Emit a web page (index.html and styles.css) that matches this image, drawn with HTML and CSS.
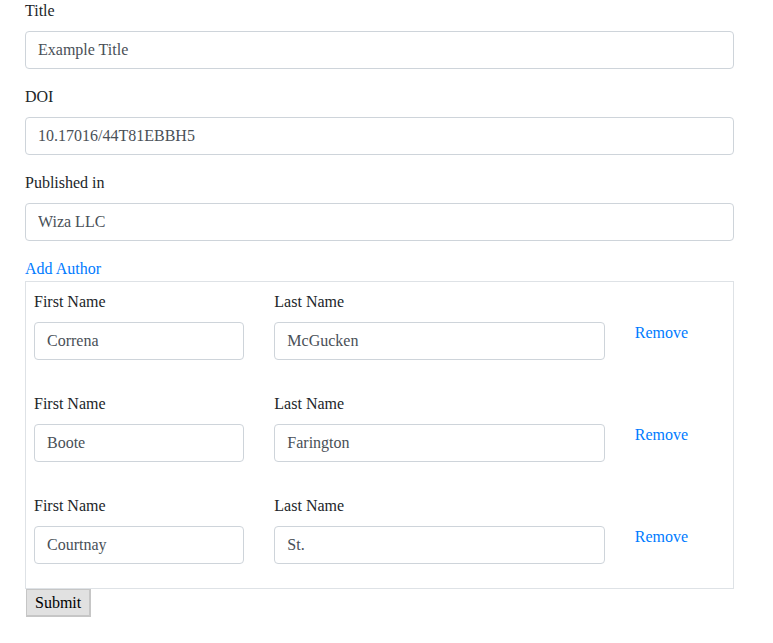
FILE: index.html
```html
<!DOCTYPE html>
<html>
<head>
<meta charset="utf-8">
<link rel="stylesheet" href="styles.css">
</head>
<body>
<form class="container">
  <div class="form-group">
    <label class="label">Title</label>
    <input class="form-control" type="text" value="Example Title">
  </div>
  <div class="form-group">
    <label class="label">DOI</label>
    <input class="form-control" type="text" value="10.17016/44T81EBBH5">
  </div>
  <div class="form-group">
    <label class="label">Published in</label>
    <input class="form-control" type="text" value="Wiza LLC">
  </div>
  <a class="link add" href="#">Add Author</a>
  <div class="authors">
    <div class="row">
      <div class="col col-4"><div class="form-group"><label class="label">First Name</label><input class="form-control" type="text" value="Correna"></div></div>
      <div class="col col-6"><div class="form-group"><label class="label">Last Name</label><input class="form-control" type="text" value="McGucken"></div></div>
      <div class="col col-2"><a class="link" href="#">Remove</a></div>
    </div>
    <div class="row">
      <div class="col col-4"><div class="form-group"><label class="label">First Name</label><input class="form-control" type="text" value="Boote"></div></div>
      <div class="col col-6"><div class="form-group"><label class="label">Last Name</label><input class="form-control" type="text" value="Farington"></div></div>
      <div class="col col-2"><a class="link" href="#">Remove</a></div>
    </div>
    <div class="row">
      <div class="col col-4"><div class="form-group"><label class="label">First Name</label><input class="form-control" type="text" value="Courtnay"></div></div>
      <div class="col col-6"><div class="form-group"><label class="label">Last Name</label><input class="form-control" type="text" value="St."></div></div>
      <div class="col col-2"><a class="link" href="#">Remove</a></div>
    </div>
  </div>
  <button class="submit" type="button">Submit</button>
</form>
</body>
</html>
```

FILE: styles.css
```css
* { box-sizing: border-box; }
html, body { margin: 0; padding: 0; background: #fff; }
body {
  font-family: "Liberation Serif", "Times New Roman", serif;
  font-size: 16px;
  line-height: 24px;
  color: #212529;
}
.container {
  width: 709px;
  margin: -1px 0 0 25px;
  display: flex;
  flex-direction: column;
  align-items: stretch;
}
.form-group {
  margin-bottom: 16px;
  display: flex;
  flex-direction: column;
}
.label {
  display: block;
  margin-bottom: 8px;
}
.form-control {
  display: block;
  width: 100%;
  height: 38px;
  padding: 6px 12px;
  font-family: inherit;
  font-size: 16px;
  line-height: 24px;
  color: #495057;
  background: #fff;
  border: 1px solid #ced4da;
  border-radius: 4px;
  outline: none;
  margin: 0;
}
.link {
  color: #007bff;
  text-decoration: none;
}
.add {
  align-self: flex-start;
}
.authors {
  border: 1px solid #dee2e6;
  padding: 8px;
}
.row {
  display: flex;
  margin: 0 -15px 16px;
  align-items: center;
}
.row:last-child { margin-bottom: 0; }
.col { padding: 0 15px; }
.col-4 { flex: 0 0 33.3333%; max-width: 33.3333%; }
.col-6 { flex: 0 0 50%; max-width: 50%; }
.col-2 { flex: 0 0 16.6667%; max-width: 16.6667%; }
.submit {
  align-self: flex-start;
  margin: 0 0 0 1px;
  font-family: inherit;
  font-size: 16px;
  line-height: 19px;
  color: #000;
  background: #e1e1e1;
  border: 2px solid #c6c6c6;
  border-width: 1px 2px 2px 1px;
  padding: 3px 8px 3px 8px;
  height: 28px;
}
```
